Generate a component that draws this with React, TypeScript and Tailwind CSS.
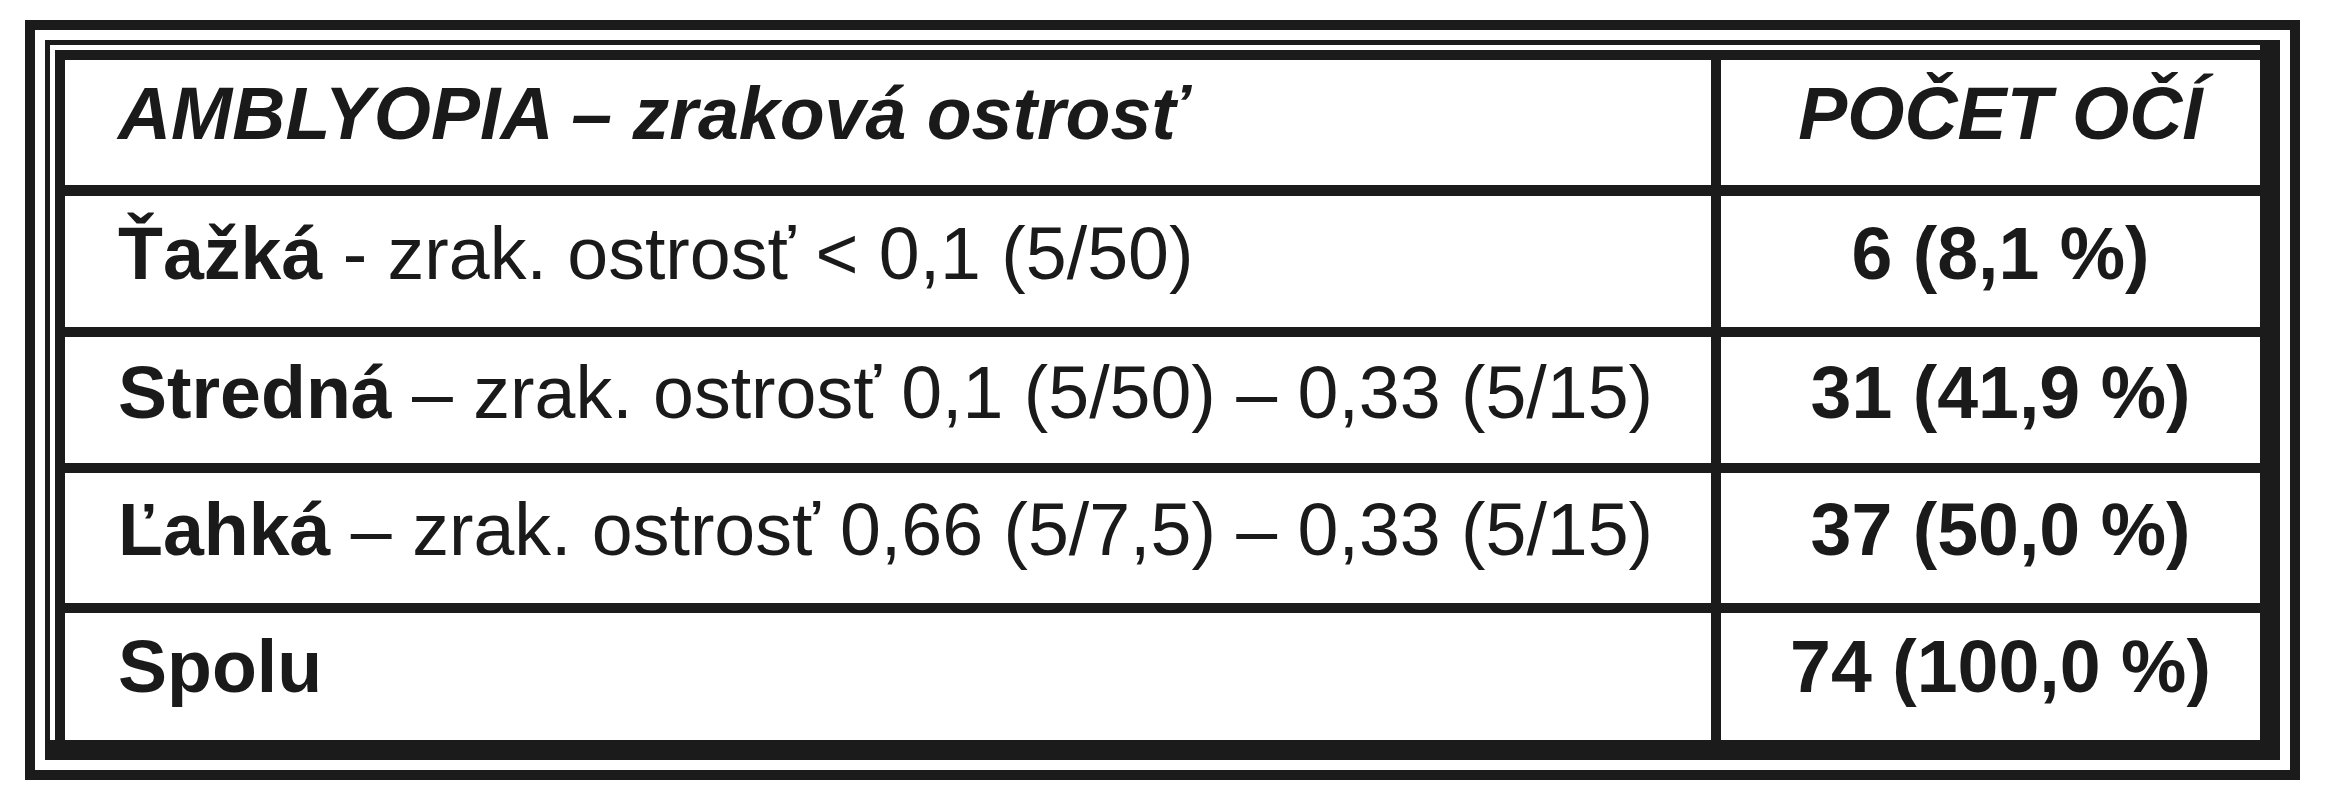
import React from "react";

const font = { fontFamily: '"Liberation Sans", Arial, Helvetica, sans-serif' };

type Row = {
  h: string;
  pt: string;
  left: React.ReactNode;
  right: React.ReactNode;
};

const rows: Row[] = [
  {
    h: "h-[131px]",
    pt: "pt-[21px]",
    left: (
      <>
        <span className="font-bold">Ťažká</span> - zrak. ostrosť &lt; 0,1 (5/50)
      </>
    ),
    right: "6 (8,1 %)",
  },
  {
    h: "h-[126px]",
    pt: "pt-[19px]",
    left: (
      <>
        <span className="font-bold">Stredná</span> – zrak. ostrosť 0,1 (5/50) – 0,33 (5/15)
      </>
    ),
    right: "31 (41,9 %)",
  },
  {
    h: "h-[130px]",
    pt: "pt-[20px]",
    left: (
      <>
        <span className="font-bold">Ľahká</span> – zrak. ostrosť 0,66 (5/7,5) – 0,33 (5/15)
      </>
    ),
    right: "37 (50,0 %)",
  },
  {
    h: "h-[127px]",
    pt: "pt-[17px]",
    left: <span className="font-bold">Spolu</span>,
    right: "74 (100,0 %)",
  },
];

export default function App() {
  return (
    <div
      className="w-[2335px] h-[800px] bg-white pt-[20px] pl-[25px] text-[#1b1a1a]"
      style={font}
    >
      <div className="w-[2275px] h-[760px] border-[10px] border-[#1c1b1b] bg-white p-[10px]">
        <div className="h-full border-t-[5px] border-l-[5px] border-r-[20px] border-b-[20px] border-[#1c1b1b] pt-[5px] pl-[5px] bg-white">
          <div className="h-full border-t-[10px] border-l-[10px] border-[#1c1b1b] flex flex-col bg-white">
            {/* header */}
            <div className="flex h-[125px]">
              <div className="w-[1646px] pl-[53px] pt-[17px] text-[73.5px] leading-[74px] font-bold italic whitespace-nowrap">
                AMBLYOPIA – zraková ostrosť
              </div>
              <div className="w-[10px] bg-[#1c1b1b]" />
              <div className="flex-1 pl-[20px] pt-[17px] text-center text-[73.5px] leading-[74px] font-bold italic whitespace-nowrap">
                POČET OČÍ
              </div>
            </div>
            <div className="h-[11px] bg-[#1c1b1b]" />
            {rows.map((r, i) => (
              <React.Fragment key={i}>
                <div className={`flex ${r.h}`}>
                  <div
                    className={`w-[1646px] pl-[53px] ${r.pt} text-[73.5px] leading-[74px] whitespace-nowrap`}
                  >
                    {r.left}
                  </div>
                  <div className="w-[10px] bg-[#1c1b1b]" />
                  <div
                    className={`flex-1 pl-[20px] ${r.pt} text-center text-[73.5px] leading-[74px] font-bold whitespace-nowrap`}
                  >
                    {r.right}
                  </div>
                </div>
                {i < rows.length - 1 && <div className="h-[10px] bg-[#1c1b1b]" />}
              </React.Fragment>
            ))}
          </div>
        </div>
      </div>
    </div>
  );
}
